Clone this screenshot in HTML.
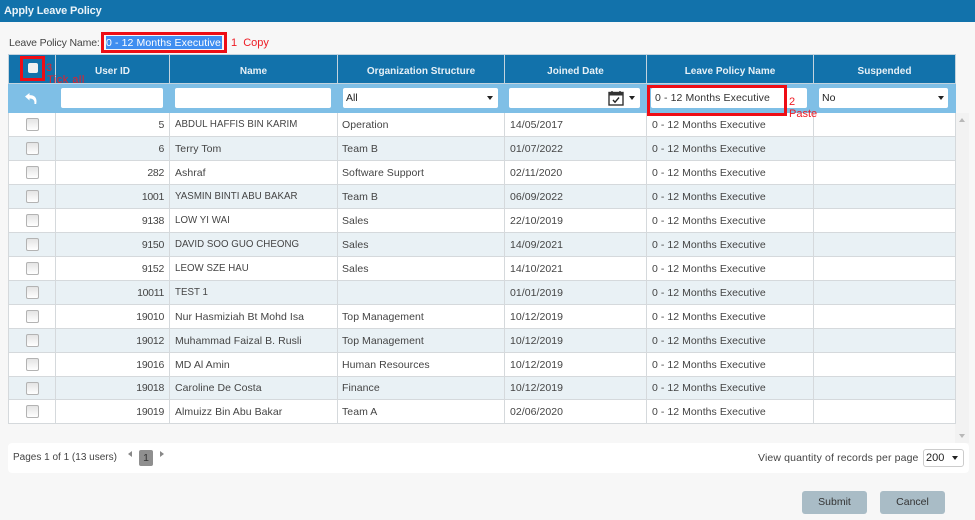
<!DOCTYPE html>
<html><head><meta charset="utf-8"><style>
html,body{margin:0;padding:0}
body{width:975px;height:520px;position:relative;overflow:hidden;background:#f7f7f7;font-family:"Liberation Sans",sans-serif;font-size:10.5px;color:#444}
.a{position:absolute;white-space:nowrap}
.red{color:#ee1c25;font-size:11px}
.box{position:absolute;border:3px solid #ee0d15;box-sizing:border-box}
table{position:absolute;left:8px;top:54px;border-collapse:collapse;table-layout:fixed;width:947px;background:#fff}
td,th{border:1px solid #d5d9dc;padding:0 5px;overflow:hidden;white-space:nowrap;box-sizing:border-box}
th{background:#1272ab;color:#e6f0f6;height:29px;font-size:10px;font-weight:bold;border-color:#c3d3de;text-align:center;padding-top:4px}
tr.f td{background:#7fbfe6;height:29px;border-color:#7fbfe6}
tr.r td{height:24px;letter-spacing:.05px}
tr.r.s td{height:23px}
tr.r:nth-child(even) td{background:#e9f1f5}
tr.r td:nth-child(4){padding-left:4px}
td.n{text-align:right;padding-right:5px;letter-spacing:-.3px!important}
.u{font-size:9.7px}
.cb{display:block;width:11px;height:11px;border:1px solid #b3b3b3;border-radius:2px;background:linear-gradient(#e4e4e4,#fff);margin:0 auto 0 12px}
.in{position:absolute;height:20px;background:#fff;border-radius:2px;box-sizing:border-box;padding:3px 3px;color:#333;line-height:15px}
.ar{position:absolute;width:0;height:0;border-left:3.5px solid transparent;border-right:3.5px solid transparent;border-top:4px solid #222}
.btn{position:absolute;top:491px;height:23px;background:#a9bcc6;border-radius:3px;text-align:center;line-height:23px;color:#333;font-size:10.5px}
</style></head><body>
<div class="a" style="left:0;top:0;width:975px;height:22px;background:#1272ab;color:#eaf3f8;font-size:11px;font-weight:bold;letter-spacing:-.15px;line-height:23px;text-indent:4px">Apply Leave Policy</div>
<div class="a" style="left:9px;top:36px;line-height:14px;letter-spacing:-.15px">Leave Policy Name:</div>
<div class="a" style="left:106px;top:36px;width:116px;height:13px;background:#3f8ef0;color:#fff;line-height:14px;text-indent:0;letter-spacing:.1px">0 - 12 Months Executive</div>
<div class="box" style="left:101px;top:32px;width:126px;height:21px"></div>
<div class="a red" style="left:231px;top:37px">1&nbsp; Copy</div>

<div class="a" style="left:955px;top:113px;width:14px;height:330px;background:#f2f2f2"></div>
<table>
<colgroup><col style="width:47px"><col style="width:114px"><col style="width:168px"><col style="width:167px"><col style="width:142px"><col style="width:167px"><col style="width:142px"></colgroup>
<tbody>
<tr><th></th><th>User ID</th><th>Name</th><th>Organization Structure</th><th>Joined Date</th><th>Leave Policy Name</th><th>Suspended</th></tr>
<tr class="f"><td></td><td></td><td></td><td></td><td></td><td></td><td></td></tr>
<tr class="r"><td><span class="cb"></span></td><td class="n">5</td><td class="u">ABDUL HAFFIS BIN KARIM</td><td>Operation</td><td>14/05/2017</td><td>0 - 12 Months Executive</td><td></td></tr>
<tr class="r"><td><span class="cb"></span></td><td class="n">6</td><td>Terry Tom</td><td>Team B</td><td>01/07/2022</td><td>0 - 12 Months Executive</td><td></td></tr>
<tr class="r"><td><span class="cb"></span></td><td class="n">282</td><td>Ashraf</td><td>Software Support</td><td>02/11/2020</td><td>0 - 12 Months Executive</td><td></td></tr>
<tr class="r"><td><span class="cb"></span></td><td class="n">1001</td><td class="u">YASMIN BINTI ABU BAKAR</td><td>Team B</td><td>06/09/2022</td><td>0 - 12 Months Executive</td><td></td></tr>
<tr class="r"><td><span class="cb"></span></td><td class="n">9138</td><td class="u">LOW YI WAI</td><td>Sales</td><td>22/10/2019</td><td>0 - 12 Months Executive</td><td></td></tr>
<tr class="r"><td><span class="cb"></span></td><td class="n">9150</td><td class="u">DAVID SOO GUO CHEONG</td><td>Sales</td><td>14/09/2021</td><td>0 - 12 Months Executive</td><td></td></tr>
<tr class="r"><td><span class="cb"></span></td><td class="n">9152</td><td class="u">LEOW SZE HAU</td><td>Sales</td><td>14/10/2021</td><td>0 - 12 Months Executive</td><td></td></tr>
<tr class="r"><td><span class="cb"></span></td><td class="n">10011</td><td class="u">TEST 1</td><td></td><td>01/01/2019</td><td>0 - 12 Months Executive</td><td></td></tr>
<tr class="r"><td><span class="cb"></span></td><td class="n">19010</td><td>Nur Hasmiziah Bt Mohd Isa</td><td>Top Management</td><td>10/12/2019</td><td>0 - 12 Months Executive</td><td></td></tr>
<tr class="r"><td><span class="cb"></span></td><td class="n">19012</td><td>Muhammad Faizal B. Rusli</td><td>Top Management</td><td>10/12/2019</td><td>0 - 12 Months Executive</td><td></td></tr>
<tr class="r"><td><span class="cb"></span></td><td class="n">19016</td><td>MD Al Amin</td><td>Human Resources</td><td>10/12/2019</td><td>0 - 12 Months Executive</td><td></td></tr>
<tr class="r s"><td><span class="cb"></span></td><td class="n">19018</td><td>Caroline De Costa</td><td>Finance</td><td>10/12/2019</td><td>0 - 12 Months Executive</td><td></td></tr>
<tr class="r"><td><span class="cb"></span></td><td class="n">19019</td><td>Almuizz Bin Abu Bakar</td><td>Team A</td><td>02/06/2020</td><td>0 - 12 Months Executive</td><td></td></tr>
</tbody></table>

<!-- header checkbox -->
<div class="a" style="left:28px;top:63px;width:10px;height:10px;background:#f1f1f1;border-radius:2px"></div>
<div class="box" style="left:20px;top:56px;width:25px;height:25px"></div>
<div class="a red" style="left:46px;top:62px;line-height:12px">3</div>
<div class="a red" style="left:47px;top:74px;line-height:12px;letter-spacing:.5px">Tick all</div>

<!-- undo icon -->
<svg class="a" style="left:24px;top:92px" width="14" height="13" viewBox="0 0 14 13"><path d="M1 4.5L5.5 1V3.2C9.5 3 12.5 5 12.5 9.5L12.2 12H10.4C10.8 8.5 9.5 6.5 5.5 6.5V8.5Z" fill="#fff"/></svg>

<!-- filters -->
<div class="in" style="left:61px;top:88px;width:102px"></div>
<div class="in" style="left:175px;top:88px;width:156px"></div>
<div class="in" style="left:343px;top:88px;width:155px;color:#222">All</div><div class="ar" style="left:487px;top:96px"></div>
<div class="in" style="left:509px;top:88px;width:131px"></div>
<svg class="a" style="left:608px;top:90px" width="16" height="16" viewBox="0 0 16 16"><rect x="1" y="2.5" width="14" height="12.5" fill="none" stroke="#333" stroke-width="1.4"/><path d="M1 3h14v2.5H1z" fill="#333"/><path d="M4 1v3M12 1v3" stroke="#333" stroke-width="1.4"/><path d="M5 10l2 2.2L11 7.5" fill="none" stroke="#222" stroke-width="1.4"/></svg>
<div class="ar" style="left:629px;top:96px"></div>
<div class="in" style="left:651px;top:88px;width:156px;color:#333;padding-left:4px;letter-spacing:.1px">0 - 12 Months Executive</div>
<div class="box" style="left:647px;top:85px;width:140px;height:31px"></div>
<div class="a red" style="left:789px;top:96px;line-height:12px">2</div>
<div class="a red" style="left:789px;top:108px;line-height:12px">Paste</div>
<div class="in" style="left:819px;top:88px;width:129px;color:#222">No</div><div class="ar" style="left:938px;top:96px"></div>

<!-- scrollbar arrows -->
<div class="ar" style="left:959px;top:118px;border-top:0;border-bottom:4px solid #b8b8b8"></div>
<div class="ar" style="left:959px;top:434px;border-top-color:#b8b8b8"></div>

<!-- pager -->
<div class="a" style="left:8px;top:443px;width:961px;height:30px;background:#fff;border-radius:4px"></div>
<div class="a" style="left:13px;top:451px;line-height:14px;font-size:10px">Pages 1 of 1 (13 users)</div>
<div class="a" style="left:128px;top:451px;width:0;height:0;border-top:3px solid transparent;border-bottom:3px solid transparent;border-right:4px solid #888"></div>
<div class="a" style="left:139px;top:450px;width:14px;height:16px;background:#8f8f8f;border-radius:2px;color:#333;text-align:center;line-height:16px">1</div>
<div class="a" style="left:160px;top:451px;width:0;height:0;border-top:3px solid transparent;border-bottom:3px solid transparent;border-left:4px solid #888"></div>
<div class="a" style="left:758px;top:451px;line-height:14px;letter-spacing:.13px">View quantity of records per page</div>
<div class="a" style="left:923px;top:449px;width:41px;height:18px;border:1px solid #ccc;border-radius:3px;box-sizing:border-box;background:#fff;color:#222;line-height:16px;padding-left:2px;font-size:11px">200</div>
<div class="ar" style="left:952px;top:456px"></div>

<div class="btn" style="left:802px;width:65px">Submit</div>
<div class="btn" style="left:880px;width:65px">Cancel</div>
</body></html>
